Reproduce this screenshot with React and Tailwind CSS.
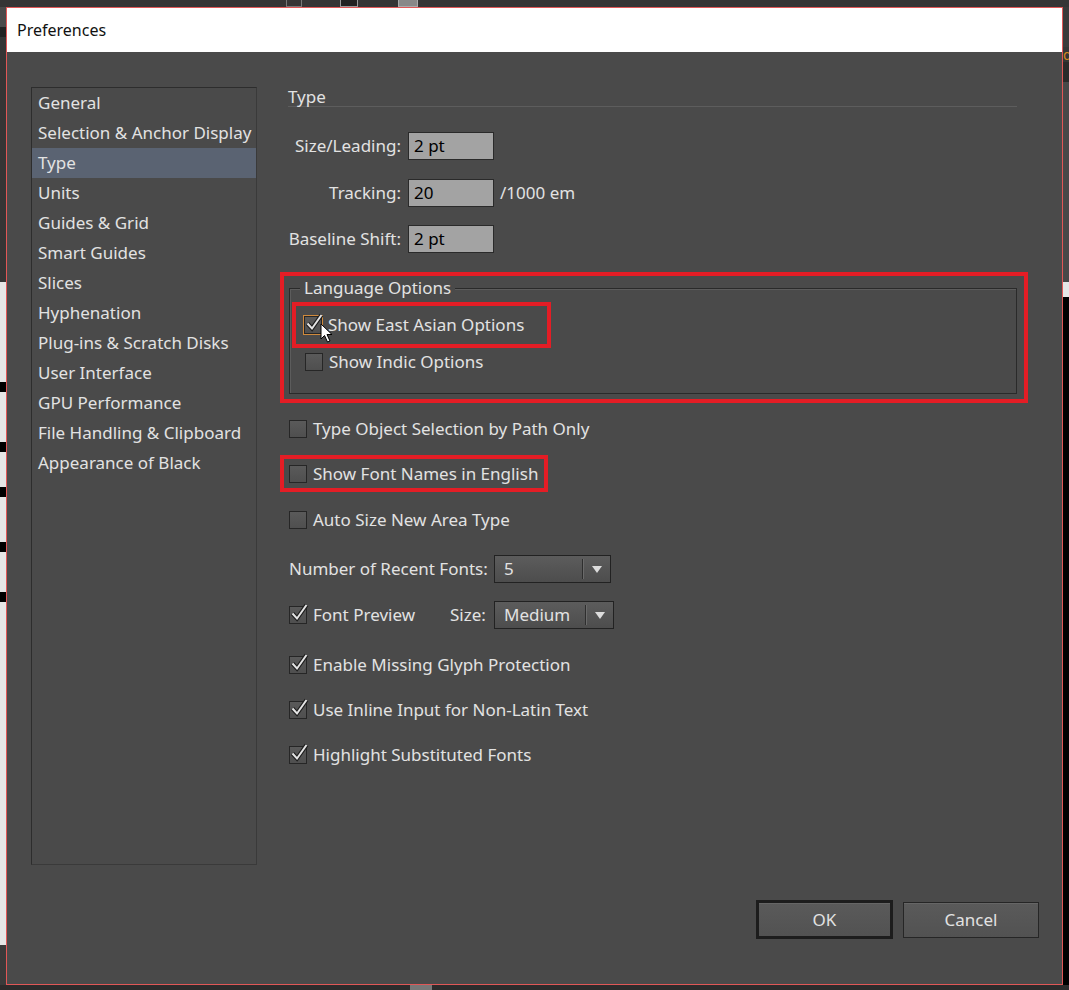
import React from "react";

const items = [
  "General",
  "Selection & Anchor Display",
  "Type",
  "Units",
  "Guides & Grid",
  "Smart Guides",
  "Slices",
  "Hyphenation",
  "Plug-ins & Scratch Disks",
  "User Interface",
  "GPU Performance",
  "File Handling & Clipboard",
  "Appearance of Black",
];

function Check({ checked, focus }) {
  return (
    <span
      className={`relative block w-[18px] h-[18px] shrink-0 border border-[#262626] bg-linear-to-b from-[#5a5a5a] to-[#4f4f4f] ${
        focus ? "outline outline-[#d08a3c]" : ""
      }`}
    >
      {checked && (
        <svg className="absolute -left-px -top-[4px] overflow-visible" width="20" height="20" viewBox="0 0 20 20">
          <path d="M3.5 10.5 L8 15.5 L17.5 2" fill="none" stroke="#1e1e1e" strokeWidth="4.2" />
          <path d="M3.5 10.5 L8 15.5 L17.5 2" fill="none" stroke="#e4e4e4" strokeWidth="2" />
        </svg>
      )}
    </span>
  );
}

function CheckRow({ label, checked, cls = "" }) {
  return (
    <div className={`flex items-center h-[20px] gap-[6px] ${cls}`}>
      <Check checked={checked} />
      <span>{label}</span>
    </div>
  );
}

function Field({ label, value, suffix, cls = "" }) {
  return (
    <div className={`flex items-center h-[28px] ${cls}`}>
      <span className="w-[113px] text-right shrink-0 whitespace-nowrap">{label}</span>
      <div className="ml-[7px] w-[86px] h-[28px] border border-[#2a2a2a] bg-[#a3a3a3] text-black pl-[5px] leading-[26px]">
        {value}
      </div>
      {suffix && <span className="ml-[6px]">{suffix}</span>}
    </div>
  );
}

function Select({ value, w }) {
  return (
    <div className={`flex items-center h-[28px] ${w} border border-[#222] bg-linear-to-b from-[#5c5c5c] to-[#4d4d4d]`}>
      <span className="flex-1 pl-[9px]">{value}</span>
      <span className="w-[2px] h-[20px] border-l border-[#2e2e2e] border-r border-r-[#6a6a6a]" />
      <span className="w-[26px] flex justify-center">
        <svg width="10" height="7" viewBox="0 0 10 7">
          <path d="M0 0H10L5 7Z" fill="#dcdcdc" />
        </svg>
      </span>
    </div>
  );
}

export default function App() {
  return (
    <div className="w-[1069px] h-[990px] overflow-hidden bg-[#353535] flex flex-col font-['Noto_Sans',sans-serif] text-[17px] text-[#e2e2e2]">
      {/* app behind */}
      <div className="h-[7px] flex shrink-0">
        <div className="w-[286px]" />
        <div className="w-[16px] h-[7px] border border-[#777] border-t-0" />
        <div className="w-[38px]" />
        <div className="w-[18px] h-[7px] border border-[#999] border-t-0 bg-[#222]" />
        <div className="w-[40px]" />
        <div className="w-[20px] h-[7px] border border-[#aaa] border-t-0 bg-[#888]" />
      </div>
      <div className="flex flex-1">
        <div className="w-[6px] flex flex-col">
          <div className="h-[20px] bg-[#4a4a4a]" />
          <div className="h-[10px] bg-[#222]" />
          <div className="h-[245px]" />
          <div className="flex-1 flex flex-col bg-[#e6e6e6]">
            <div className="h-[100px]" />
            <div className="h-[10px] bg-black" />
            <div className="h-[50px]" />
            <div className="h-[10px] bg-black" />
            <div className="h-[35px]" />
            <div className="h-[10px] bg-black" />
            <div className="h-[45px]" />
            <div className="h-[10px] bg-black" />
            <div className="h-[40px]" />
            <div className="h-[10px] bg-black" />
          </div>
          <div className="h-[40px] bg-[#3a3a3a]" />
        </div>

        {/* dialog */}
        <div className="w-[1057px] h-[978px] border border-[#e05757] flex flex-col bg-[#4a4a4a]">
          <div className="h-[44px] bg-white text-[#111] text-[16px] pl-[10px] flex items-center">Preferences</div>

          <div className="flex-1 flex flex-col relative">
            <div className="flex mt-[35px]">
              {/* sidebar */}
              <div className="ml-[24px] w-[226px] h-[778px] border border-[#2d2d2d] border-r-[#3a3a3a] border-b-[#3a3a3a]">
                {items.map((it) => (
                  <div
                    key={it}
                    className={`h-[30px] pl-[6px] leading-[30px] whitespace-nowrap ${it === "Type" ? "bg-[#5a6372]" : ""}`}
                  >
                    {it}
                  </div>
                ))}
              </div>

              {/* panel */}
              <div className="ml-[31px] w-[729px] flex flex-col">
                <div className="h-[20px] leading-[20px] border-b border-[#5d5d5d]">Type</div>

                <Field label="Size/Leading:" value="2 pt" cls="mt-[25px]" />
                <Field label="Tracking:" value="20" suffix="/1000 em" cls="mt-[19px]" />
                <Field label="Baseline Shift:" value="2 pt" cls="mt-[18px]" />

                <div className="mt-[19px] -ml-[8px] w-[748px] h-[131px] border-4 border-[#e41d25] pt-[12px] pl-[5px]">
                  <div className="relative w-[728px] h-[106px] border border-[#2a2a2a] shadow-[inset_1px_1px_0_#5c5c5c] pt-[13px] pl-[2px]">
                    <span className="absolute -top-[11px] left-[10px] px-[4px] bg-[#4a4a4a] leading-[20px]">Language Options</span>
                    <div className="w-[259px] h-[46px] border-4 border-[#e41d25] flex items-center pl-[8px] gap-[6px]">
                      <Check checked focus />
                      <span>Show East Asian Options</span>
                    </div>
                    <CheckRow label="Show Indic Options" cls="mt-[4px] ml-[13px]" />
                    <svg className="absolute left-[30px] top-[34px]" width="14" height="21" viewBox="0 0 14 21">
                      <path d="M1 1 L1 16 L4.5 12.5 L7.5 19 L10 18 L7 11.5 L12 11.5 Z" fill="#fff" stroke="#000" strokeWidth="1" />
                    </svg>
                  </div>
                </div>

                <CheckRow label="Type Object Selection by Path Only" cls="mt-[16px] ml-px" />

                <div className="mt-[16px] -ml-[8px] w-[268px] h-[37px] border-4 border-[#e41d25] flex items-center pl-[5px] gap-[6px]">
                  <Check />
                  <span>Show Font Names in English</span>
                </div>

                <CheckRow label="Auto Size New Area Type" cls="mt-[18px] ml-px" />

                <div className="mt-[25px] flex items-center ml-px">
                  <span className="w-[205px] whitespace-nowrap">Number of Recent Fonts:</span>
                  <Select value="5" w="w-[117px]" />
                </div>

                <div className="mt-[18px] flex items-center ml-px">
                  <div className="flex items-center gap-[6px] w-[161px]">
                    <Check checked />
                    <span>Font Preview</span>
                  </div>
                  <span className="w-[44px]">Size:</span>
                  <Select value="Medium" w="w-[120px]" />
                </div>

                <CheckRow label="Enable Missing Glyph Protection" checked cls="mt-[26px] ml-px" />
                <CheckRow label="Use Inline Input for Non-Latin Text" checked cls="mt-[25px] ml-px" />
                <CheckRow label="Highlight Substituted Fonts" checked cls="mt-[25px] ml-px" />
              </div>
            </div>

            <div className="mt-[35px] flex justify-end pr-[23px] gap-[10px] items-start">
              <button className="w-[137px] h-[39px] border-[3px] border-[#1d1d1d] bg-linear-to-b from-[#5a5a5a] to-[#525252] shadow-[inset_0_1px_0_#666]">
                OK
              </button>
              <button className="mt-[2px] w-[136px] h-[36px] border border-[#262626] bg-linear-to-b from-[#5a5a5a] to-[#525252] shadow-[inset_0_1px_0_#666]">
                Cancel
              </button>
            </div>
          </div>
        </div>

        <div className="w-[6px] flex flex-col">
          <div className="h-[40px] bg-[#3a3a3a]" />
          <div className="h-[15px] text-[#d38a20] text-[14px] leading-[15px] overflow-hidden">g</div>
          <div className="h-[20px] bg-[#2a2a2a]" />
          <div className="h-[200px] bg-[#484848]" />
          <div className="h-[15px] bg-[#e6e6e6]" />
          <div className="flex-1 bg-black" />
        </div>
      </div>
      <div className="h-[5px] bg-[#2c2c2c] flex">
        <div className="w-[410px]" />
        <div className="w-[22px] bg-[#777]" />
      </div>
    </div>
  );
}
